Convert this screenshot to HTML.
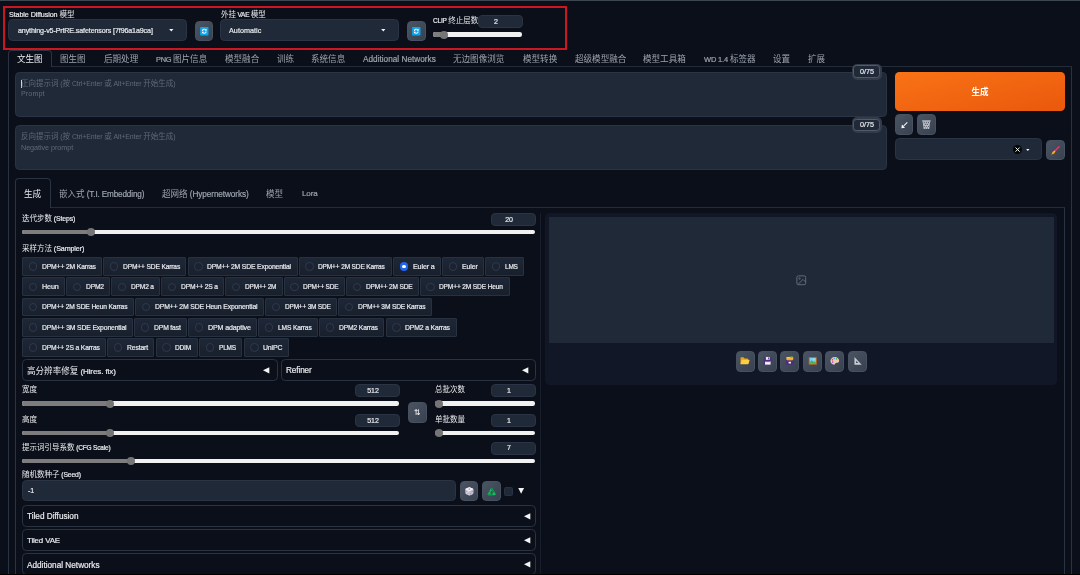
<!DOCTYPE html>
<html lang="zh-CN"><head><meta charset="utf-8"><title>Stable Diffusion</title><style>
html,body{margin:0;padding:0;}
body{width:1080px;height:575px;overflow:hidden;background:#0b0f19;position:relative;font-family:"Liberation Sans","Noto Sans CJK SC",sans-serif;}
.a{position:absolute;box-sizing:content-box;}
.t{white-space:nowrap;will-change:transform;}
.ph .l{-webkit-text-stroke:0 !important;}
.l{font-size:var(--fs,0.94em);letter-spacing:var(--ls,-0.02em);-webkit-text-stroke:0.2px currentColor;}
svg{display:block;overflow:visible;}
</style></head><body>
<div class="a" style="left:8.40px;top:66.20px;width:1063.20px;height:533.80px;border:1px solid #2a3342;box-sizing:border-box;border-top:none;"></div>
<div class="a" style="left:52.00px;top:65.70px;width:1019.60px;height:1.00px;background:#242c3a;"></div>
<div class="a" style="left:8.40px;top:50.20px;width:43.90px;height:17.00px;border:1px solid #2a3342;border-radius:4px;box-sizing:border-box;border-bottom:none;border-bottom-left-radius:0;border-bottom-right-radius:0;"></div>
<div class="a" style="left:15.40px;top:207.30px;width:1049.40px;height:392.70px;border:1px solid #2a3342;box-sizing:border-box;border-top:none;"></div>
<div class="a" style="left:50.00px;top:207.00px;width:1014.80px;height:1.00px;background:#242c3a;"></div>
<div class="a" style="left:15.10px;top:178.40px;width:35.90px;height:29.90px;border:1px solid #2a3342;border-radius:4px;box-sizing:border-box;border-bottom:none;border-bottom-left-radius:0;border-bottom-right-radius:0;"></div>
<div class="a t " style="top:8.60px;height:12px;line-height:12px;font-size:7.5px;color:#e8eaee;left:8.80px;--ls:-0.106px;--fs:0.960em;"><span class="l">Stable Diffusion </span>模型</div>
<div class="a t " style="top:8.60px;height:12px;line-height:12px;font-size:7.5px;color:#e8eaee;left:220.50px;--ls:-0.281px;--fs:0.870em;">外挂<span class="l"> VAE </span>模型</div>
<div class="a" style="left:8.00px;top:19.10px;width:178.70px;height:22.20px;background:#1f2937;border:1px solid #2a3444;border-radius:4.3px;box-sizing:border-box;"></div>
<div class="a t " style="top:24.70px;height:12px;line-height:12px;font-size:7.5px;color:#e8eaee;left:17.80px;--ls:-0.123px;--fs:0.948em;"><span class="l">anything-v5-PrtRE.safetensors [7f96a1a9ca]</span></div>
<svg class="a" style="left:169.30px;top:29.30px" width="4.60" height="2.60" viewBox="0 0 10 6"><path d="M0 0 L10 0 L5 6 Z" fill="#f3f4f6"/></svg>
<div class="a" style="left:220.40px;top:19.10px;width:178.60px;height:22.20px;background:#1f2937;border:1px solid #2a3444;border-radius:4.3px;box-sizing:border-box;"></div>
<div class="a t " style="top:24.70px;height:12px;line-height:12px;font-size:7.5px;color:#e8eaee;left:229.30px;--ls:0.042px;--fs:0.960em;"><span class="l">Automatic</span></div>
<svg class="a" style="left:381.10px;top:29.30px" width="4.60" height="2.60" viewBox="0 0 10 6"><path d="M0 0 L10 0 L5 6 Z" fill="#f3f4f6"/></svg>
<div class="a" style="left:194.70px;top:20.90px;width:18.60px;height:20.10px;background:linear-gradient(to bottom right,#4a5463,#37414f);border:1px solid #475160;border-radius:4px;box-sizing:border-box;"></div>
<svg class="a" style="left:199.65px;top:26.70px" width="8.60" height="8.40" viewBox="0 0 36 36"><rect x="0" y="0" width="36" height="36" rx="3" fill="#10a4ee"/><path d="M8 17 a10 10 0 0 1 17-7 l3-3 v9 h-9 l3.5-3.5 a6 6 0 0 0-10 4.5z M28 19 a10 10 0 0 1-17 7 l-3 3 v-9 h9 l-3.5 3.5 a6 6 0 0 0 10-4.5z" fill="#fff"/></svg>
<div class="a" style="left:407.00px;top:20.90px;width:18.60px;height:20.10px;background:linear-gradient(to bottom right,#4a5463,#37414f);border:1px solid #475160;border-radius:4px;box-sizing:border-box;"></div>
<svg class="a" style="left:411.95px;top:26.70px" width="8.60" height="8.40" viewBox="0 0 36 36"><rect x="0" y="0" width="36" height="36" rx="3" fill="#10a4ee"/><path d="M8 17 a10 10 0 0 1 17-7 l3-3 v9 h-9 l3.5-3.5 a6 6 0 0 0-10 4.5z M28 19 a10 10 0 0 1-17 7 l-3 3 v-9 h9 l-3.5 3.5 a6 6 0 0 0 10-4.5z" fill="#fff"/></svg>
<div class="a t " style="top:15.10px;height:12px;line-height:12px;font-size:7.5px;color:#e8eaee;left:433.00px;--ls:-0.201px;--fs:0.870em;"><span class="l">CLIP </span>终止层数</div>
<div class="a" style="left:478.00px;top:15.00px;width:45.00px;height:13.00px;background:#1f2937;border:1px solid #2a3444;border-radius:4px;box-sizing:border-box;"></div>
<div class="a t " style="top:15.70px;height:12px;line-height:12px;font-size:7.5px;color:#e8eaee;left:396.30px;width:200px;text-align:center;"><span class="l">2</span></div>
<div class="a" style="left:433.00px;top:32.35px;width:89.00px;height:4.30px;background:#f1f1f1;border-radius:2.2px;"></div>
<div class="a" style="left:433.00px;top:32.35px;width:11.00px;height:4.30px;background:#7d7d7d;border-radius:2.2px;"></div>
<div class="a" style="left:440.00px;top:30.50px;width:8.00px;height:8.00px;background:#757575;border-radius:4.0px;"></div>
<div class="a" style="left:3.00px;top:6.00px;width:564.00px;height:44.00px;border:1px solid #cc1720;box-sizing:border-box;border-width:2px;"></div>
<div class="a t " style="top:52.30px;height:14px;line-height:14px;font-size:8.56px;color:#e8eaee;left:17.40px;">文生图</div>
<div class="a t " style="top:52.30px;height:14px;line-height:14px;font-size:8.56px;color:#9ca3af;left:60.00px;">图生图</div>
<div class="a t " style="top:52.30px;height:14px;line-height:14px;font-size:8.56px;color:#9ca3af;left:103.60px;">后期处理</div>
<div class="a t " style="top:52.30px;height:14px;line-height:14px;font-size:8.56px;color:#9ca3af;left:155.80px;--ls:-0.293px;--fs:0.870em;"><span class="l">PNG </span>图片信息</div>
<div class="a t " style="top:52.30px;height:14px;line-height:14px;font-size:8.56px;color:#9ca3af;left:224.50px;">模型融合</div>
<div class="a t " style="top:52.30px;height:14px;line-height:14px;font-size:8.56px;color:#9ca3af;left:276.50px;">训练</div>
<div class="a t " style="top:52.30px;height:14px;line-height:14px;font-size:8.56px;color:#9ca3af;left:311.40px;">系统信息</div>
<div class="a t " style="top:51.60px;height:14px;line-height:14px;font-size:8.56px;color:#9ca3af;left:363.20px;--ls:0.015px;--fs:0.960em;"><span class="l">Additional Networks</span></div>
<div class="a t " style="top:52.30px;height:14px;line-height:14px;font-size:8.56px;color:#9ca3af;left:453.40px;">无边图像浏览</div>
<div class="a t " style="top:52.30px;height:14px;line-height:14px;font-size:8.56px;color:#9ca3af;left:522.50px;">模型转换</div>
<div class="a t " style="top:52.30px;height:14px;line-height:14px;font-size:8.56px;color:#9ca3af;left:574.50px;">超级模型融合</div>
<div class="a t " style="top:52.30px;height:14px;line-height:14px;font-size:8.56px;color:#9ca3af;left:642.70px;">模型工具箱</div>
<div class="a t " style="top:52.30px;height:14px;line-height:14px;font-size:8.56px;color:#9ca3af;left:703.60px;--ls:-0.155px;--fs:0.873em;"><span class="l">WD 1.4 </span>标签器</div>
<div class="a t " style="top:52.30px;height:14px;line-height:14px;font-size:8.56px;color:#9ca3af;left:772.90px;">设置</div>
<div class="a t " style="top:52.30px;height:14px;line-height:14px;font-size:8.56px;color:#9ca3af;left:807.80px;">扩展</div>
<div class="a" style="left:15.10px;top:72.00px;width:872.30px;height:45.30px;background:#1f2937;border:1px solid #2a3444;border-radius:4.3px;box-sizing:border-box;"></div>
<div class="a" style="left:15.10px;top:125.00px;width:872.30px;height:44.60px;background:#1f2937;border:1px solid #2a3444;border-radius:4.3px;box-sizing:border-box;"></div>
<div class="a" style="left:21.00px;top:79.60px;width:0.60px;height:8.00px;background:#cfd3da;"></div>
<div class="a t ph" style="top:78.20px;height:12px;line-height:12px;font-size:7.5px;color:#5f6a7a;left:21.20px;--ls:-0.108px;--fs:0.930em;">正向提示词<span class="l"> (</span>按<span class="l"> Ctrl+Enter </span>或<span class="l"> Alt+Enter </span>开始生成<span class="l">)</span></div>
<div class="a t ph" style="top:88.00px;height:12px;line-height:12px;font-size:7.5px;color:#5f6a7a;left:21.20px;--ls:0.080px;--fs:0.960em;"><span class="l">Prompt</span></div>
<div class="a t ph" style="top:130.90px;height:12px;line-height:12px;font-size:7.5px;color:#5f6a7a;left:21.20px;--ls:-0.108px;--fs:0.930em;">反向提示词<span class="l"> (</span>按<span class="l"> Ctrl+Enter </span>或<span class="l"> Alt+Enter </span>开始生成<span class="l">)</span></div>
<div class="a t ph" style="top:141.50px;height:12px;line-height:12px;font-size:7.5px;color:#5f6a7a;left:21.20px;--ls:-0.042px;--fs:0.960em;"><span class="l">Negative prompt</span></div>
<div class="a" style="left:851.50px;top:63.60px;width:30.40px;height:16.50px;background:#333b48;border-radius:5px;"></div>
<div class="a" style="left:853.40px;top:65.40px;width:26.60px;height:12.60px;background:#1f2937;border:1px solid #525b69;border-radius:3.4px;box-sizing:border-box;"></div>
<div class="a t " style="top:66.05px;height:12px;line-height:12px;font-size:7.5px;color:#e8eaee;left:766.70px;width:200px;text-align:center;--ls:0.044px;--fs:0.960em;"><span class="l">0/75</span></div>
<div class="a" style="left:851.50px;top:117.10px;width:30.40px;height:16.00px;background:#333b48;border-radius:5px;"></div>
<div class="a" style="left:853.40px;top:118.90px;width:26.60px;height:12.10px;background:#1f2937;border:1px solid #525b69;border-radius:3.4px;box-sizing:border-box;"></div>
<div class="a t " style="top:119.30px;height:12px;line-height:12px;font-size:7.5px;color:#e8eaee;left:766.70px;width:200px;text-align:center;--ls:0.044px;--fs:0.960em;"><span class="l">0/75</span></div>
<div class="a" style="left:894.60px;top:72.00px;width:170.40px;height:38.60px;background:linear-gradient(to bottom right,#f97316,#ea580c);border-radius:4.3px;"></div>
<div class="a t " style="top:85.20px;height:14px;line-height:14px;font-size:8.56px;color:#fff;left:879.60px;width:200px;text-align:center;font-weight:bold;">生成</div>
<div class="a" style="left:894.60px;top:114.40px;width:18.90px;height:20.40px;background:linear-gradient(to bottom right,#4a5463,#37414f);border:1px solid #475160;border-radius:4px;box-sizing:border-box;"></div>
<div class="a" style="left:917.00px;top:114.40px;width:19.20px;height:20.40px;background:linear-gradient(to bottom right,#4a5463,#37414f);border:1px solid #475160;border-radius:4px;box-sizing:border-box;"></div>
<svg class="a" style="left:900.60px;top:121.60px" width="6.70" height="6.50" viewBox="0 0 20 20"><path d="M19 1 L8 12" stroke="#f4f4f6" stroke-width="3.2"/><path d="M1 19 L2.5 8 L12 17.5 Z" fill="#fff"/></svg>
<svg class="a" style="left:921.90px;top:119.90px" width="8.80" height="9.20" viewBox="0 0 22 23"><path d="M0.5 1 h21 v3 h-21z" fill="#d0d2d6"/><path d="M1.8 4 h18.4 l-2.2 18.4 h-14z" fill="#bfc2c7"/><circle cx="5.6" cy="6.8" r="1.55" fill="#4f5866"/><circle cx="10.9" cy="6.8" r="1.55" fill="#4f5866"/><circle cx="16.2" cy="6.8" r="1.55" fill="#4f5866"/><circle cx="8.2" cy="11.2" r="1.55" fill="#4f5866"/><circle cx="13.5" cy="11.2" r="1.55" fill="#4f5866"/><circle cx="5.6" cy="15.8" r="1.55" fill="#4f5866"/><circle cx="10.9" cy="15.8" r="1.55" fill="#4f5866"/><circle cx="16.2" cy="15.8" r="1.55" fill="#4f5866"/><circle cx="8.2" cy="20.2" r="1.55" fill="#4f5866"/><circle cx="13.5" cy="20.2" r="1.55" fill="#4f5866"/></svg>
<div class="a" style="left:894.60px;top:138.40px;width:147.60px;height:21.80px;background:#1f2937;border:1px solid #2a3444;border-radius:4.3px;box-sizing:border-box;"></div>
<div class="a" style="left:1012.80px;top:144.80px;width:9.50px;height:9.50px;background:#05070b;border-radius:4.8px;"></div>
<svg class="a" style="left:1014.90px;top:146.90px" width="5.20" height="5.20" viewBox="0 0 10 10"><path d="M1 1 L9 9 M9 1 L1 9" stroke="#fff" stroke-width="1.9"/></svg>
<svg class="a" style="left:1025.85px;top:148.75px" width="3.70" height="2.10" viewBox="0 0 10 6"><path d="M0 0 L10 0 L5 6 Z" fill="#f3f4f6"/></svg>
<div class="a" style="left:1046.00px;top:140.20px;width:19.00px;height:20.00px;background:linear-gradient(to bottom right,#4a5463,#37414f);border:1px solid #475160;border-radius:4px;box-sizing:border-box;"></div>
<svg class="a" style="left:1050.00px;top:145.00px" width="11.00" height="11.00" viewBox="0 0 11 11"><path d="M9.0 1.7 L4.9 6.0" stroke="#f0365e" stroke-width="1.55" stroke-linecap="round"/><path d="M4.9 6.0 L4.1 6.8" stroke="#dfe3e8" stroke-width="1.6"/><path d="M4.3 6.1 L5.1 6.9 C4.9 8.4 3.2 9.3 1.2 9.4 C2.2 8.6 2.0 7.7 2.5 7.0 C3.0 6.3 3.7 6.0 4.3 6.1z" fill="#f7a81c"/></svg>
<div class="a t " style="top:187.10px;height:14px;line-height:14px;font-size:8.56px;color:#e8eaee;left:23.90px;">生成</div>
<div class="a t " style="top:187.10px;height:14px;line-height:14px;font-size:8.56px;color:#9ca3af;left:58.80px;--ls:-0.134px;--fs:0.952em;">嵌入式<span class="l"> (T.I. Embedding)</span></div>
<div class="a t " style="top:187.10px;height:14px;line-height:14px;font-size:8.56px;color:#9ca3af;left:161.90px;--ls:-0.094px;--fs:0.960em;">超网络<span class="l"> (Hypernetworks)</span></div>
<div class="a t " style="top:187.10px;height:14px;line-height:14px;font-size:8.56px;color:#9ca3af;left:266.40px;">模型</div>
<div class="a t " style="top:186.40px;height:14px;line-height:14px;font-size:8.56px;color:#9ca3af;left:301.50px;--ls:-0.150px;--fs:0.941em;"><span class="l">Lora</span></div>
<div class="a t " style="top:213.00px;height:12px;line-height:12px;font-size:7.5px;color:#e8eaee;left:22.10px;--ls:-0.115px;--fs:0.922em;">迭代步数<span class="l"> (Steps)</span></div>
<div class="a" style="left:490.80px;top:213.30px;width:44.90px;height:12.60px;background:#1f2937;border:1px solid #2a3444;border-radius:4px;box-sizing:border-box;"></div>
<div class="a t " style="top:213.80px;height:12px;line-height:12px;font-size:7.5px;color:#e8eaee;left:409.30px;width:200px;text-align:center;"><span class="l">20</span></div>
<div class="a" style="left:22.10px;top:229.75px;width:513.20px;height:4.30px;background:#f1f1f1;border-radius:2.2px;"></div>
<div class="a" style="left:22.10px;top:229.75px;width:68.90px;height:4.30px;background:#7d7d7d;border-radius:2.2px;"></div>
<div class="a" style="left:87.00px;top:227.90px;width:8.00px;height:8.00px;background:#757575;border-radius:4.0px;"></div>
<div class="a t " style="top:242.50px;height:12px;line-height:12px;font-size:7.5px;color:#e8eaee;left:22.10px;--ls:-0.123px;--fs:0.955em;">采样方法<span class="l"> (Sampler)</span></div>
<div class="a" style="left:22.00px;top:257.00px;width:80.00px;height:18.90px;background:linear-gradient(to bottom,#1e2736,#18202d);border:1px solid #273140;border-radius:1px;box-sizing:border-box;"></div>
<div class="a" style="left:28.58px;top:262.30px;width:8.60px;height:8.60px;background:#1b2332;border:1px solid #2f3949;border-radius:4.3px;box-sizing:border-box;"></div>
<div class="a t " style="top:260.70px;height:12px;line-height:12px;font-size:7.5px;color:#e8eaee;left:41.60px;--ls:-0.145px;--fs:0.903em;"><span class="l">DPM++ 2M Karras</span></div>
<div class="a" style="left:103.00px;top:257.00px;width:83.30px;height:18.90px;background:linear-gradient(to bottom,#1e2736,#18202d);border:1px solid #273140;border-radius:1px;box-sizing:border-box;"></div>
<div class="a" style="left:109.58px;top:262.30px;width:8.60px;height:8.60px;background:#1b2332;border:1px solid #2f3949;border-radius:4.3px;box-sizing:border-box;"></div>
<div class="a t " style="top:260.70px;height:12px;line-height:12px;font-size:7.5px;color:#e8eaee;left:122.60px;--ls:-0.147px;--fs:0.887em;"><span class="l">DPM++ SDE Karras</span></div>
<div class="a" style="left:187.50px;top:257.00px;width:110.20px;height:18.90px;background:linear-gradient(to bottom,#1e2736,#18202d);border:1px solid #273140;border-radius:1px;box-sizing:border-box;"></div>
<div class="a" style="left:194.08px;top:262.30px;width:8.60px;height:8.60px;background:#1b2332;border:1px solid #2f3949;border-radius:4.3px;box-sizing:border-box;"></div>
<div class="a t " style="top:260.70px;height:12px;line-height:12px;font-size:7.5px;color:#e8eaee;left:207.10px;--ls:-0.141px;--fs:0.905em;"><span class="l">DPM++ 2M SDE Exponential</span></div>
<div class="a" style="left:298.70px;top:257.00px;width:93.00px;height:18.90px;background:linear-gradient(to bottom,#1e2736,#18202d);border:1px solid #273140;border-radius:1px;box-sizing:border-box;"></div>
<div class="a" style="left:305.28px;top:262.30px;width:8.60px;height:8.60px;background:#1b2332;border:1px solid #2f3949;border-radius:4.3px;box-sizing:border-box;"></div>
<div class="a t " style="top:260.70px;height:12px;line-height:12px;font-size:7.5px;color:#e8eaee;left:318.30px;--ls:-0.147px;--fs:0.875em;"><span class="l">DPM++ 2M SDE Karras</span></div>
<div class="a" style="left:393.00px;top:257.00px;width:47.80px;height:18.90px;background:linear-gradient(to bottom,#1e2736,#18202d);border:1px solid #273140;border-radius:1px;box-sizing:border-box;"></div>
<div class="a" style="left:399.58px;top:262.30px;width:8.60px;height:8.60px;background:#2563eb;border-radius:4.3px;"></div>
<div class="a" style="left:402.18px;top:264.90px;width:3.40px;height:3.40px;background:#fff;border-radius:1.7px;"></div>
<div class="a t " style="top:260.70px;height:12px;line-height:12px;font-size:7.5px;color:#e8eaee;left:412.60px;--ls:-0.119px;--fs:0.948em;"><span class="l">Euler a</span></div>
<div class="a" style="left:442.00px;top:257.00px;width:41.80px;height:18.90px;background:linear-gradient(to bottom,#1e2736,#18202d);border:1px solid #273140;border-radius:1px;box-sizing:border-box;"></div>
<div class="a" style="left:448.58px;top:262.30px;width:8.60px;height:8.60px;background:#1b2332;border:1px solid #2f3949;border-radius:4.3px;box-sizing:border-box;"></div>
<div class="a t " style="top:260.70px;height:12px;line-height:12px;font-size:7.5px;color:#e8eaee;left:461.60px;--ls:-0.123px;--fs:0.931em;"><span class="l">Euler</span></div>
<div class="a" style="left:485.00px;top:257.00px;width:38.80px;height:18.90px;background:linear-gradient(to bottom,#1e2736,#18202d);border:1px solid #273140;border-radius:1px;box-sizing:border-box;"></div>
<div class="a" style="left:491.58px;top:262.30px;width:8.60px;height:8.60px;background:#1b2332;border:1px solid #2f3949;border-radius:4.3px;box-sizing:border-box;"></div>
<div class="a t " style="top:260.70px;height:12px;line-height:12px;font-size:7.5px;color:#e8eaee;left:504.60px;--ls:-0.238px;--fs:0.870em;"><span class="l">LMS</span></div>
<div class="a" style="left:22.00px;top:277.25px;width:42.70px;height:18.90px;background:linear-gradient(to bottom,#1e2736,#18202d);border:1px solid #273140;border-radius:1px;box-sizing:border-box;"></div>
<div class="a" style="left:28.58px;top:282.55px;width:8.60px;height:8.60px;background:#1b2332;border:1px solid #2f3949;border-radius:4.3px;box-sizing:border-box;"></div>
<div class="a t " style="top:280.95px;height:12px;line-height:12px;font-size:7.5px;color:#e8eaee;left:41.60px;--ls:-0.155px;--fs:0.960em;"><span class="l">Heun</span></div>
<div class="a" style="left:66.00px;top:277.25px;width:44.00px;height:18.90px;background:linear-gradient(to bottom,#1e2736,#18202d);border:1px solid #273140;border-radius:1px;box-sizing:border-box;"></div>
<div class="a" style="left:72.58px;top:282.55px;width:8.60px;height:8.60px;background:#1b2332;border:1px solid #2f3949;border-radius:4.3px;box-sizing:border-box;"></div>
<div class="a t " style="top:280.95px;height:12px;line-height:12px;font-size:7.5px;color:#e8eaee;left:85.60px;--ls:-0.182px;--fs:0.894em;"><span class="l">DPM2</span></div>
<div class="a" style="left:111.00px;top:277.25px;width:49.00px;height:18.90px;background:linear-gradient(to bottom,#1e2736,#18202d);border:1px solid #273140;border-radius:1px;box-sizing:border-box;"></div>
<div class="a" style="left:117.58px;top:282.55px;width:8.60px;height:8.60px;background:#1b2332;border:1px solid #2f3949;border-radius:4.3px;box-sizing:border-box;"></div>
<div class="a t " style="top:280.95px;height:12px;line-height:12px;font-size:7.5px;color:#e8eaee;left:130.60px;--ls:-0.158px;--fs:0.880em;"><span class="l">DPM2 a</span></div>
<div class="a" style="left:161.00px;top:277.25px;width:63.00px;height:18.90px;background:linear-gradient(to bottom,#1e2736,#18202d);border:1px solid #273140;border-radius:1px;box-sizing:border-box;"></div>
<div class="a" style="left:167.58px;top:282.55px;width:8.60px;height:8.60px;background:#1b2332;border:1px solid #2f3949;border-radius:4.3px;box-sizing:border-box;"></div>
<div class="a t " style="top:280.95px;height:12px;line-height:12px;font-size:7.5px;color:#e8eaee;left:180.60px;--ls:-0.150px;--fs:0.894em;"><span class="l">DPM++ 2S a</span></div>
<div class="a" style="left:225.00px;top:277.25px;width:57.50px;height:18.90px;background:linear-gradient(to bottom,#1e2736,#18202d);border:1px solid #273140;border-radius:1px;box-sizing:border-box;"></div>
<div class="a" style="left:231.58px;top:282.55px;width:8.60px;height:8.60px;background:#1b2332;border:1px solid #2f3949;border-radius:4.3px;box-sizing:border-box;"></div>
<div class="a t " style="top:280.95px;height:12px;line-height:12px;font-size:7.5px;color:#e8eaee;left:244.60px;--ls:-0.201px;--fs:0.870em;"><span class="l">DPM++ 2M</span></div>
<div class="a" style="left:283.50px;top:277.25px;width:61.50px;height:18.90px;background:linear-gradient(to bottom,#1e2736,#18202d);border:1px solid #273140;border-radius:1px;box-sizing:border-box;"></div>
<div class="a" style="left:290.08px;top:282.55px;width:8.60px;height:8.60px;background:#1b2332;border:1px solid #2f3949;border-radius:4.3px;box-sizing:border-box;"></div>
<div class="a t " style="top:280.95px;height:12px;line-height:12px;font-size:7.5px;color:#e8eaee;left:303.10px;--ls:-0.217px;--fs:0.870em;"><span class="l">DPM++ SDE</span></div>
<div class="a" style="left:346.00px;top:277.25px;width:72.70px;height:18.90px;background:linear-gradient(to bottom,#1e2736,#18202d);border:1px solid #273140;border-radius:1px;box-sizing:border-box;"></div>
<div class="a" style="left:352.58px;top:282.55px;width:8.60px;height:8.60px;background:#1b2332;border:1px solid #2f3949;border-radius:4.3px;box-sizing:border-box;"></div>
<div class="a t " style="top:280.95px;height:12px;line-height:12px;font-size:7.5px;color:#e8eaee;left:365.60px;--ls:-0.162px;--fs:0.876em;"><span class="l">DPM++ 2M SDE</span></div>
<div class="a" style="left:419.70px;top:277.25px;width:90.00px;height:18.90px;background:linear-gradient(to bottom,#1e2736,#18202d);border:1px solid #273140;border-radius:1px;box-sizing:border-box;"></div>
<div class="a" style="left:426.28px;top:282.55px;width:8.60px;height:8.60px;background:#1b2332;border:1px solid #2f3949;border-radius:4.3px;box-sizing:border-box;"></div>
<div class="a t " style="top:280.95px;height:12px;line-height:12px;font-size:7.5px;color:#e8eaee;left:439.30px;--ls:-0.155px;--fs:0.882em;"><span class="l">DPM++ 2M SDE Heun</span></div>
<div class="a" style="left:22.00px;top:297.50px;width:111.60px;height:18.90px;background:linear-gradient(to bottom,#1e2736,#18202d);border:1px solid #273140;border-radius:1px;box-sizing:border-box;"></div>
<div class="a" style="left:28.58px;top:302.80px;width:8.60px;height:8.60px;background:#1b2332;border:1px solid #2f3949;border-radius:4.3px;box-sizing:border-box;"></div>
<div class="a t " style="top:301.20px;height:12px;line-height:12px;font-size:7.5px;color:#e8eaee;left:41.60px;--ls:-0.145px;--fs:0.893em;"><span class="l">DPM++ 2M SDE Heun Karras</span></div>
<div class="a" style="left:135.10px;top:297.50px;width:128.70px;height:18.90px;background:linear-gradient(to bottom,#1e2736,#18202d);border:1px solid #273140;border-radius:1px;box-sizing:border-box;"></div>
<div class="a" style="left:141.68px;top:302.80px;width:8.60px;height:8.60px;background:#1b2332;border:1px solid #2f3949;border-radius:4.3px;box-sizing:border-box;"></div>
<div class="a t " style="top:301.20px;height:12px;line-height:12px;font-size:7.5px;color:#e8eaee;left:154.70px;--ls:-0.141px;--fs:0.914em;"><span class="l">DPM++ 2M SDE Heun Exponential</span></div>
<div class="a" style="left:265.10px;top:297.50px;width:71.80px;height:18.90px;background:linear-gradient(to bottom,#1e2736,#18202d);border:1px solid #273140;border-radius:1px;box-sizing:border-box;"></div>
<div class="a" style="left:271.68px;top:302.80px;width:8.60px;height:8.60px;background:#1b2332;border:1px solid #2f3949;border-radius:4.3px;box-sizing:border-box;"></div>
<div class="a t " style="top:301.20px;height:12px;line-height:12px;font-size:7.5px;color:#e8eaee;left:284.70px;--ls:-0.211px;--fs:0.870em;"><span class="l">DPM++ 3M SDE</span></div>
<div class="a" style="left:338.20px;top:297.50px;width:93.60px;height:18.90px;background:linear-gradient(to bottom,#1e2736,#18202d);border:1px solid #273140;border-radius:1px;box-sizing:border-box;"></div>
<div class="a" style="left:344.78px;top:302.80px;width:8.60px;height:8.60px;background:#1b2332;border:1px solid #2f3949;border-radius:4.3px;box-sizing:border-box;"></div>
<div class="a t " style="top:301.20px;height:12px;line-height:12px;font-size:7.5px;color:#e8eaee;left:357.80px;--ls:-0.147px;--fs:0.883em;"><span class="l">DPM++ 3M SDE Karras</span></div>
<div class="a" style="left:22.00px;top:317.80px;width:110.70px;height:18.90px;background:linear-gradient(to bottom,#1e2736,#18202d);border:1px solid #273140;border-radius:1px;box-sizing:border-box;"></div>
<div class="a" style="left:28.58px;top:323.10px;width:8.60px;height:8.60px;background:#1b2332;border:1px solid #2f3949;border-radius:4.3px;box-sizing:border-box;"></div>
<div class="a t " style="top:321.50px;height:12px;line-height:12px;font-size:7.5px;color:#e8eaee;left:41.60px;--ls:-0.141px;--fs:0.910em;"><span class="l">DPM++ 3M SDE Exponential</span></div>
<div class="a" style="left:134.00px;top:317.80px;width:52.90px;height:18.90px;background:linear-gradient(to bottom,#1e2736,#18202d);border:1px solid #273140;border-radius:1px;box-sizing:border-box;"></div>
<div class="a" style="left:140.58px;top:323.10px;width:8.60px;height:8.60px;background:#1b2332;border:1px solid #2f3949;border-radius:4.3px;box-sizing:border-box;"></div>
<div class="a t " style="top:321.50px;height:12px;line-height:12px;font-size:7.5px;color:#e8eaee;left:153.60px;--ls:-0.135px;--fs:0.904em;"><span class="l">DPM fast</span></div>
<div class="a" style="left:188.20px;top:317.80px;width:68.90px;height:18.90px;background:linear-gradient(to bottom,#1e2736,#18202d);border:1px solid #273140;border-radius:1px;box-sizing:border-box;"></div>
<div class="a" style="left:194.78px;top:323.10px;width:8.60px;height:8.60px;background:#1b2332;border:1px solid #2f3949;border-radius:4.3px;box-sizing:border-box;"></div>
<div class="a t " style="top:321.50px;height:12px;line-height:12px;font-size:7.5px;color:#e8eaee;left:207.80px;--ls:-0.137px;--fs:0.944em;"><span class="l">DPM adaptive</span></div>
<div class="a" style="left:258.20px;top:317.80px;width:59.80px;height:18.90px;background:linear-gradient(to bottom,#1e2736,#18202d);border:1px solid #273140;border-radius:1px;box-sizing:border-box;"></div>
<div class="a" style="left:264.78px;top:323.10px;width:8.60px;height:8.60px;background:#1b2332;border:1px solid #2f3949;border-radius:4.3px;box-sizing:border-box;"></div>
<div class="a t " style="top:321.50px;height:12px;line-height:12px;font-size:7.5px;color:#e8eaee;left:277.80px;--ls:-0.139px;--fs:0.886em;"><span class="l">LMS Karras</span></div>
<div class="a" style="left:319.30px;top:317.80px;width:64.90px;height:18.90px;background:linear-gradient(to bottom,#1e2736,#18202d);border:1px solid #273140;border-radius:1px;box-sizing:border-box;"></div>
<div class="a" style="left:325.88px;top:323.10px;width:8.60px;height:8.60px;background:#1b2332;border:1px solid #2f3949;border-radius:4.3px;box-sizing:border-box;"></div>
<div class="a t " style="top:321.50px;height:12px;line-height:12px;font-size:7.5px;color:#e8eaee;left:338.90px;--ls:-0.143px;--fs:0.897em;"><span class="l">DPM2 Karras</span></div>
<div class="a" style="left:385.60px;top:317.80px;width:71.10px;height:18.90px;background:linear-gradient(to bottom,#1e2736,#18202d);border:1px solid #273140;border-radius:1px;box-sizing:border-box;"></div>
<div class="a" style="left:392.18px;top:323.10px;width:8.60px;height:8.60px;background:#1b2332;border:1px solid #2f3949;border-radius:4.3px;box-sizing:border-box;"></div>
<div class="a t " style="top:321.50px;height:12px;line-height:12px;font-size:7.5px;color:#e8eaee;left:405.20px;--ls:-0.138px;--fs:0.912em;"><span class="l">DPM2 a Karras</span></div>
<div class="a" style="left:22.00px;top:338.05px;width:84.00px;height:18.90px;background:linear-gradient(to bottom,#1e2736,#18202d);border:1px solid #273140;border-radius:1px;box-sizing:border-box;"></div>
<div class="a" style="left:28.58px;top:343.35px;width:8.60px;height:8.60px;background:#1b2332;border:1px solid #2f3949;border-radius:4.3px;box-sizing:border-box;"></div>
<div class="a t " style="top:341.75px;height:12px;line-height:12px;font-size:7.5px;color:#e8eaee;left:41.60px;--ls:-0.138px;--fs:0.898em;"><span class="l">DPM++ 2S a Karras</span></div>
<div class="a" style="left:107.30px;top:338.05px;width:47.10px;height:18.90px;background:linear-gradient(to bottom,#1e2736,#18202d);border:1px solid #273140;border-radius:1px;box-sizing:border-box;"></div>
<div class="a" style="left:113.88px;top:343.35px;width:8.60px;height:8.60px;background:#1b2332;border:1px solid #2f3949;border-radius:4.3px;box-sizing:border-box;"></div>
<div class="a t " style="top:341.75px;height:12px;line-height:12px;font-size:7.5px;color:#e8eaee;left:126.90px;--ls:-0.121px;--fs:0.903em;"><span class="l">Restart</span></div>
<div class="a" style="left:155.80px;top:338.05px;width:42.20px;height:18.90px;background:linear-gradient(to bottom,#1e2736,#18202d);border:1px solid #273140;border-radius:1px;box-sizing:border-box;"></div>
<div class="a" style="left:162.38px;top:343.35px;width:8.60px;height:8.60px;background:#1b2332;border:1px solid #2f3949;border-radius:4.3px;box-sizing:border-box;"></div>
<div class="a t " style="top:341.75px;height:12px;line-height:12px;font-size:7.5px;color:#e8eaee;left:175.40px;--ls:-0.168px;--fs:0.875em;"><span class="l">DDIM</span></div>
<div class="a" style="left:199.30px;top:338.05px;width:43.10px;height:18.90px;background:linear-gradient(to bottom,#1e2736,#18202d);border:1px solid #273140;border-radius:1px;box-sizing:border-box;"></div>
<div class="a" style="left:205.88px;top:343.35px;width:8.60px;height:8.60px;background:#1b2332;border:1px solid #2f3949;border-radius:4.3px;box-sizing:border-box;"></div>
<div class="a t " style="top:341.75px;height:12px;line-height:12px;font-size:7.5px;color:#e8eaee;left:218.90px;--ls:-0.196px;--fs:0.870em;"><span class="l">PLMS</span></div>
<div class="a" style="left:243.50px;top:338.05px;width:45.40px;height:18.90px;background:linear-gradient(to bottom,#1e2736,#18202d);border:1px solid #273140;border-radius:1px;box-sizing:border-box;"></div>
<div class="a" style="left:250.08px;top:343.35px;width:8.60px;height:8.60px;background:#1b2332;border:1px solid #2f3949;border-radius:4.3px;box-sizing:border-box;"></div>
<div class="a t " style="top:341.75px;height:12px;line-height:12px;font-size:7.5px;color:#e8eaee;left:263.10px;--ls:-0.152px;--fs:0.925em;"><span class="l">UniPC</span></div>
<div class="a" style="left:22.10px;top:359.10px;width:255.90px;height:21.60px;border:1px solid #2a3342;border-radius:4.3px;box-sizing:border-box;"></div>
<div class="a t " style="top:363.90px;height:14px;line-height:14px;font-size:8.56px;color:#e8eaee;left:26.70px;--ls:-0.111px;--fs:0.941em;">高分辨率修复<span class="l"> (Hires. fix)</span></div>
<svg class="a" style="left:263.25px;top:366.80px" width="6.30" height="6.60" viewBox="0 0 10 10"><path d="M10 0 L10 10 L0 5 Z" fill="#f3f4f6"/></svg>
<div class="a" style="left:281.00px;top:359.10px;width:255.00px;height:21.60px;border:1px solid #2a3342;border-radius:4.3px;box-sizing:border-box;"></div>
<div class="a t " style="top:363.20px;height:14px;line-height:14px;font-size:8.56px;color:#e8eaee;left:285.60px;--ls:-0.108px;--fs:0.960em;"><span class="l">Refiner</span></div>
<svg class="a" style="left:521.65px;top:366.80px" width="6.30" height="6.60" viewBox="0 0 10 10"><path d="M10 0 L10 10 L0 5 Z" fill="#f3f4f6"/></svg>
<div class="a t " style="top:384.30px;height:12px;line-height:12px;font-size:7.5px;color:#e8eaee;left:22.10px;">宽度</div>
<div class="a" style="left:354.90px;top:384.30px;width:45.10px;height:12.80px;background:#1f2937;border:1px solid #2a3444;border-radius:4px;box-sizing:border-box;"></div>
<div class="a t " style="top:384.90px;height:12px;line-height:12px;font-size:7.5px;color:#e8eaee;left:273.30px;width:200px;text-align:center;"><span class="l">512</span></div>
<div class="a" style="left:22.10px;top:401.45px;width:376.80px;height:4.30px;background:#f1f1f1;border-radius:2.2px;"></div>
<div class="a" style="left:22.10px;top:401.45px;width:87.90px;height:4.30px;background:#7d7d7d;border-radius:2.2px;"></div>
<div class="a" style="left:106.00px;top:399.60px;width:8.00px;height:8.00px;background:#757575;border-radius:4.0px;"></div>
<div class="a t " style="top:414.00px;height:12px;line-height:12px;font-size:7.5px;color:#e8eaee;left:22.10px;">高度</div>
<div class="a" style="left:354.90px;top:414.00px;width:45.10px;height:12.80px;background:#1f2937;border:1px solid #2a3444;border-radius:4px;box-sizing:border-box;"></div>
<div class="a t " style="top:414.60px;height:12px;line-height:12px;font-size:7.5px;color:#e8eaee;left:273.30px;width:200px;text-align:center;"><span class="l">512</span></div>
<div class="a" style="left:22.10px;top:430.95px;width:376.80px;height:4.30px;background:#f1f1f1;border-radius:2.2px;"></div>
<div class="a" style="left:22.10px;top:430.95px;width:87.90px;height:4.30px;background:#7d7d7d;border-radius:2.2px;"></div>
<div class="a" style="left:106.00px;top:429.10px;width:8.00px;height:8.00px;background:#757575;border-radius:4.0px;"></div>
<div class="a" style="left:408.10px;top:402.30px;width:18.70px;height:20.50px;background:linear-gradient(to bottom right,#4a5463,#37414f);border:1px solid #475160;border-radius:4px;box-sizing:border-box;"></div>
<div class="a t " style="top:406.60px;height:12px;line-height:12px;font-size:8px;color:#fff;left:317.30px;width:200px;text-align:center;font-family:'DejaVu Sans',sans-serif;">⇅</div>
<div class="a t " style="top:384.30px;height:12px;line-height:12px;font-size:7.5px;color:#e8eaee;left:435.10px;">总批次数</div>
<div class="a" style="left:490.80px;top:384.30px;width:44.90px;height:12.80px;background:#1f2937;border:1px solid #2a3444;border-radius:4px;box-sizing:border-box;"></div>
<div class="a t " style="top:384.90px;height:12px;line-height:12px;font-size:7.5px;color:#e8eaee;left:408.90px;width:200px;text-align:center;"><span class="l">1</span></div>
<div class="a" style="left:435.30px;top:401.45px;width:99.80px;height:4.30px;background:#f1f1f1;border-radius:2.2px;"></div>
<div class="a" style="left:435.30px;top:401.45px;width:4.00px;height:4.30px;background:#7d7d7d;border-radius:2.2px;"></div>
<div class="a" style="left:435.30px;top:399.60px;width:8.00px;height:8.00px;background:#757575;border-radius:4.0px;"></div>
<div class="a t " style="top:414.00px;height:12px;line-height:12px;font-size:7.5px;color:#e8eaee;left:435.10px;">单批数量</div>
<div class="a" style="left:490.80px;top:414.00px;width:44.90px;height:12.80px;background:#1f2937;border:1px solid #2a3444;border-radius:4px;box-sizing:border-box;"></div>
<div class="a t " style="top:414.60px;height:12px;line-height:12px;font-size:7.5px;color:#e8eaee;left:408.90px;width:200px;text-align:center;"><span class="l">1</span></div>
<div class="a" style="left:435.30px;top:430.95px;width:99.80px;height:4.30px;background:#f1f1f1;border-radius:2.2px;"></div>
<div class="a" style="left:435.30px;top:430.95px;width:4.00px;height:4.30px;background:#7d7d7d;border-radius:2.2px;"></div>
<div class="a" style="left:435.30px;top:429.10px;width:8.00px;height:8.00px;background:#757575;border-radius:4.0px;"></div>
<div class="a t " style="top:441.80px;height:12px;line-height:12px;font-size:7.5px;color:#e8eaee;left:22.10px;--ls:-0.165px;--fs:0.870em;">提示词引导系数<span class="l"> (CFG Scale)</span></div>
<div class="a" style="left:490.80px;top:441.80px;width:44.90px;height:12.90px;background:#1f2937;border:1px solid #2a3444;border-radius:4px;box-sizing:border-box;"></div>
<div class="a t " style="top:442.45px;height:12px;line-height:12px;font-size:7.5px;color:#e8eaee;left:408.90px;width:200px;text-align:center;"><span class="l">7</span></div>
<div class="a" style="left:22.10px;top:458.55px;width:513.20px;height:4.30px;background:#f1f1f1;border-radius:2.2px;"></div>
<div class="a" style="left:22.10px;top:458.55px;width:108.80px;height:4.30px;background:#7d7d7d;border-radius:2.2px;"></div>
<div class="a" style="left:126.90px;top:456.70px;width:8.00px;height:8.00px;background:#757575;border-radius:4.0px;"></div>
<div class="a t " style="top:469.10px;height:12px;line-height:12px;font-size:7.5px;color:#e8eaee;left:22.10px;--ls:-0.123px;--fs:0.905em;">随机数种子<span class="l"> (Seed)</span></div>
<div class="a" style="left:22.10px;top:479.60px;width:433.90px;height:21.70px;background:#1f2937;border:1px solid #2a3444;border-radius:4.3px;box-sizing:border-box;"></div>
<div class="a t " style="top:484.70px;height:12px;line-height:12px;font-size:7.5px;color:#e8eaee;left:28.20px;"><span class="l">-1</span></div>
<div class="a" style="left:459.50px;top:481.00px;width:18.50px;height:20.30px;background:linear-gradient(to bottom right,#4a5463,#37414f);border:1px solid #475160;border-radius:4px;box-sizing:border-box;"></div>
<div class="a" style="left:481.70px;top:481.00px;width:19.00px;height:20.30px;background:linear-gradient(to bottom right,#4a5463,#37414f);border:1px solid #475160;border-radius:4px;box-sizing:border-box;"></div>
<svg class="a" style="left:464.60px;top:487.30px" width="8.70" height="8.70" viewBox="0 0 20 20"><path d="M10 0.8 C11 0.8 18.6 4 19 5 C19.4 6 19.2 14.6 18.6 15.4 C18 16.2 11 19.4 10 19.4 C9 19.4 2 16.2 1.4 15.4 C0.8 14.6 0.6 6 1 5 C1.4 4 9 0.8 10 0.8z" fill="#d5cfe0"/><path d="M10 0.8 C11 0.8 18.6 4 19 5 C18.4 6.2 11 9.4 10 9.4 C9 9.4 1.6 6.2 1 5 C1.4 4 9 0.8 10 0.8z" fill="#f3f0f7"/><path d="M10 9.4 V19.4 C11 19.4 18 16.2 18.6 15.4 C19.2 14.6 19.4 6 19 5 C18.4 6.2 11 9.4 10 9.4z" fill="#c4bdd2"/><ellipse cx="10" cy="4.4" rx="1.9" ry="1.2" fill="#ea4a5f"/><circle cx="4.2" cy="9.6" r="1.1" fill="#6b5f86"/><circle cx="6.8" cy="14.6" r="1.1" fill="#6b5f86"/><circle cx="13" cy="15.6" r="1.1" fill="#6b5f86"/><circle cx="16.4" cy="9.6" r="1.1" fill="#6b5f86"/></svg>
<svg class="a" style="left:486.80px;top:486.60px" width="9.30" height="9.00" viewBox="0 0 24 23"><path d="M12 4.2 L20.2 18.8 H3.8 Z" fill="none" stroke="#13c060" stroke-width="4.6" stroke-linejoin="round"/><path d="M12 4.2 L16.1 11.5" stroke="#0b8f47" stroke-width="4.6" stroke-linecap="round"/><path d="M3.8 18.8 H12" stroke="#0e9d4e" stroke-width="4.6" stroke-linecap="round"/><path d="M5.0 11.2 L9.4 13.6 M17.4 10.0 L14.6 14.6 M12.6 15.4 V22.6" stroke="#414b5a" stroke-width="1.5"/></svg>
<div class="a" style="left:504.20px;top:487.00px;width:8.80px;height:8.70px;background:#1f2937;border:1px solid #283242;border-radius:1.6px;box-sizing:border-box;"></div>
<svg class="a" style="left:517.75px;top:487.80px" width="6.30" height="5.80" viewBox="0 0 10 10"><path d="M0 0 L10 0 L5 10 Z" fill="#f3f4f6"/></svg>
<div class="a" style="left:22.10px;top:505.20px;width:513.90px;height:21.70px;border:1px solid #2a3342;border-radius:4.3px;box-sizing:border-box;"></div>
<div class="a t " style="top:509.35px;height:14px;line-height:14px;font-size:8.56px;color:#e8eaee;left:26.70px;--ls:-0.002px;--fs:0.960em;"><span class="l">Tiled Diffusion</span></div>
<svg class="a" style="left:523.75px;top:512.95px" width="6.30" height="6.60" viewBox="0 0 10 10"><path d="M10 0 L10 10 L0 5 Z" fill="#f3f4f6"/></svg>
<div class="a" style="left:22.10px;top:529.00px;width:513.90px;height:21.90px;border:1px solid #2a3342;border-radius:4.3px;box-sizing:border-box;"></div>
<div class="a t " style="top:533.25px;height:14px;line-height:14px;font-size:8.56px;color:#e8eaee;left:26.70px;--ls:-0.144px;--fs:0.925em;"><span class="l">Tiled VAE</span></div>
<svg class="a" style="left:523.75px;top:536.85px" width="6.30" height="6.60" viewBox="0 0 10 10"><path d="M10 0 L10 10 L0 5 Z" fill="#f3f4f6"/></svg>
<div class="a" style="left:22.10px;top:553.00px;width:513.90px;height:22.40px;border:1px solid #2a3342;border-radius:4.3px;box-sizing:border-box;"></div>
<div class="a t " style="top:557.50px;height:14px;line-height:14px;font-size:8.56px;color:#e8eaee;left:26.70px;--ls:0.004px;--fs:0.960em;"><span class="l">Additional Networks</span></div>
<svg class="a" style="left:523.75px;top:561.10px" width="6.30" height="6.60" viewBox="0 0 10 10"><path d="M10 0 L10 10 L0 5 Z" fill="#f3f4f6"/></svg>
<div class="a" style="left:539.60px;top:212.50px;width:0.80px;height:361.50px;background:#171d2a;"></div>
<div class="a" style="left:544.70px;top:213.00px;width:512.80px;height:171.80px;background:#111726;border-radius:4.3px;"></div>
<div class="a" style="left:548.80px;top:217.00px;width:504.90px;height:125.80px;background:#1f2937;"></div>
<svg class="a" style="left:795.90px;top:274.86px" width="10.58" height="10.58" viewBox="0 0 24 24"><rect x="2" y="2" width="20" height="20" rx="3.4" fill="none" stroke="#6a7382" stroke-width="2"/><circle cx="8" cy="8" r="1.7" fill="none" stroke="#6a7382" stroke-width="1.7"/><path d="M22 16 L16 10 L4.5 21.5" fill="none" stroke="#6a7382" stroke-width="2"/></svg>
<div class="a" style="left:735.60px;top:351.10px;width:19.00px;height:20.80px;background:linear-gradient(to bottom right,#4a5463,#37414f);border:1px solid #475160;border-radius:4px;box-sizing:border-box;"></div>
<div class="a" style="left:758.00px;top:351.10px;width:19.00px;height:20.80px;background:linear-gradient(to bottom right,#4a5463,#37414f);border:1px solid #475160;border-radius:4px;box-sizing:border-box;"></div>
<div class="a" style="left:780.30px;top:351.10px;width:19.00px;height:20.80px;background:linear-gradient(to bottom right,#4a5463,#37414f);border:1px solid #475160;border-radius:4px;box-sizing:border-box;"></div>
<div class="a" style="left:802.80px;top:351.10px;width:19.00px;height:20.80px;background:linear-gradient(to bottom right,#4a5463,#37414f);border:1px solid #475160;border-radius:4px;box-sizing:border-box;"></div>
<div class="a" style="left:825.20px;top:351.10px;width:19.00px;height:20.80px;background:linear-gradient(to bottom right,#4a5463,#37414f);border:1px solid #475160;border-radius:4px;box-sizing:border-box;"></div>
<div class="a" style="left:847.80px;top:351.10px;width:19.00px;height:20.80px;background:linear-gradient(to bottom right,#4a5463,#37414f);border:1px solid #475160;border-radius:4px;box-sizing:border-box;"></div>
<svg class="a" style="left:740.30px;top:356.30px" width="9.60" height="9.60" viewBox="0 0 20 20"><path d="M1 4 a1.5 1.5 0 0 1 1.5-1.5 h5 l2 2.5 h6 a1.5 1.5 0 0 1 1.5 1.5 v10 h-16z" fill="#e2a31c"/><path d="M4.2 8 h14.6 a1 1 0 0 1 1 1.3 l-2 7 a1.5 1.5 0 0 1-1.4 1 h-15.4 l2.2-8 a1.4 1.4 0 0 1 1-1.3z" fill="#ffcf3f"/></svg>
<svg class="a" style="left:762.70px;top:356.30px" width="9.60" height="9.60" viewBox="0 0 20 20"><path d="M2 3.5 a1.5 1.5 0 0 1 1.5-1.5 h12 l2.5 2.5 v12 a1.5 1.5 0 0 1-1.5 1.5 h-13 a1.5 1.5 0 0 1-1.5-1.5z" fill="#4a2f7c"/><rect x="6" y="2" width="8" height="6" fill="#e6e9ee"/><rect x="10.8" y="3" width="2" height="4" fill="#4a2f7c"/><rect x="4.2" y="10.5" width="11.6" height="7.5" fill="#f1f2f4"/><rect x="4.2" y="10.5" width="11.6" height="2.2" fill="#e0405a"/></svg>
<svg class="a" style="left:785.00px;top:356.30px" width="9.60" height="9.60" viewBox="0 0 20 20"><rect x="3" y="2" width="14" height="7" fill="#ffc93c"/><rect x="11" y="1" width="5" height="3" fill="#6dbb45"/><rect x="2" y="8" width="16" height="10" rx="1.2" fill="#4a2f7c"/><rect x="4" y="5" width="12" height="4" fill="#f7a928"/><rect x="7.5" y="12" width="5" height="3.6" fill="#f1f2f4"/></svg>
<svg class="a" style="left:807.50px;top:356.30px" width="9.60" height="9.60" viewBox="0 0 20 20"><rect x="1.5" y="2" width="17" height="16" rx="1" fill="#b26a2b"/><rect x="3.6" y="4" width="12.8" height="12" fill="#7fd0f5"/><path d="M3.6 16 V12.5 L8 9 L11.5 12.5 L13.5 11 L16.4 13.5 V16z" fill="#4caf50"/><circle cx="12.6" cy="7" r="1.7" fill="#ffd83b"/></svg>
<svg class="a" style="left:829.90px;top:356.30px" width="9.60" height="9.60" viewBox="0 0 20 20"><path d="M10 2 C4.5 2 1 6 1 10.5 C1 15 4.5 18 8.5 18 C11 18 10.5 15.8 11.8 14.8 C13.5 13.6 19 15.5 19 9.5 C19 5 15 2 10 2z" fill="#f1c9b8"/><circle cx="5.2" cy="8" r="1.7" fill="#e0405a"/><circle cx="9" cy="5.2" r="1.7" fill="#4aa3f0"/><circle cx="13.6" cy="6" r="1.7" fill="#4caf50"/><circle cx="5.6" cy="12.8" r="1.7" fill="#a05ad6"/><circle cx="15.6" cy="10" r="1.5" fill="#ffd83b"/></svg>
<svg class="a" style="left:852.50px;top:356.30px" width="9.60" height="9.60" viewBox="0 0 20 20"><path d="M3 2 L18 18 H3 Z M6.4 10 V14.8 H11 Z" fill="#c9ccd3" fill-rule="evenodd"/></svg>
<div class="a" style="left:0.00px;top:0.00px;width:1080.00px;height:1.10px;background:#3e4650;"></div>
<div class="a" style="left:0.00px;top:573.80px;width:1080.00px;height:1.20px;background:#000;"></div>
</body></html>
